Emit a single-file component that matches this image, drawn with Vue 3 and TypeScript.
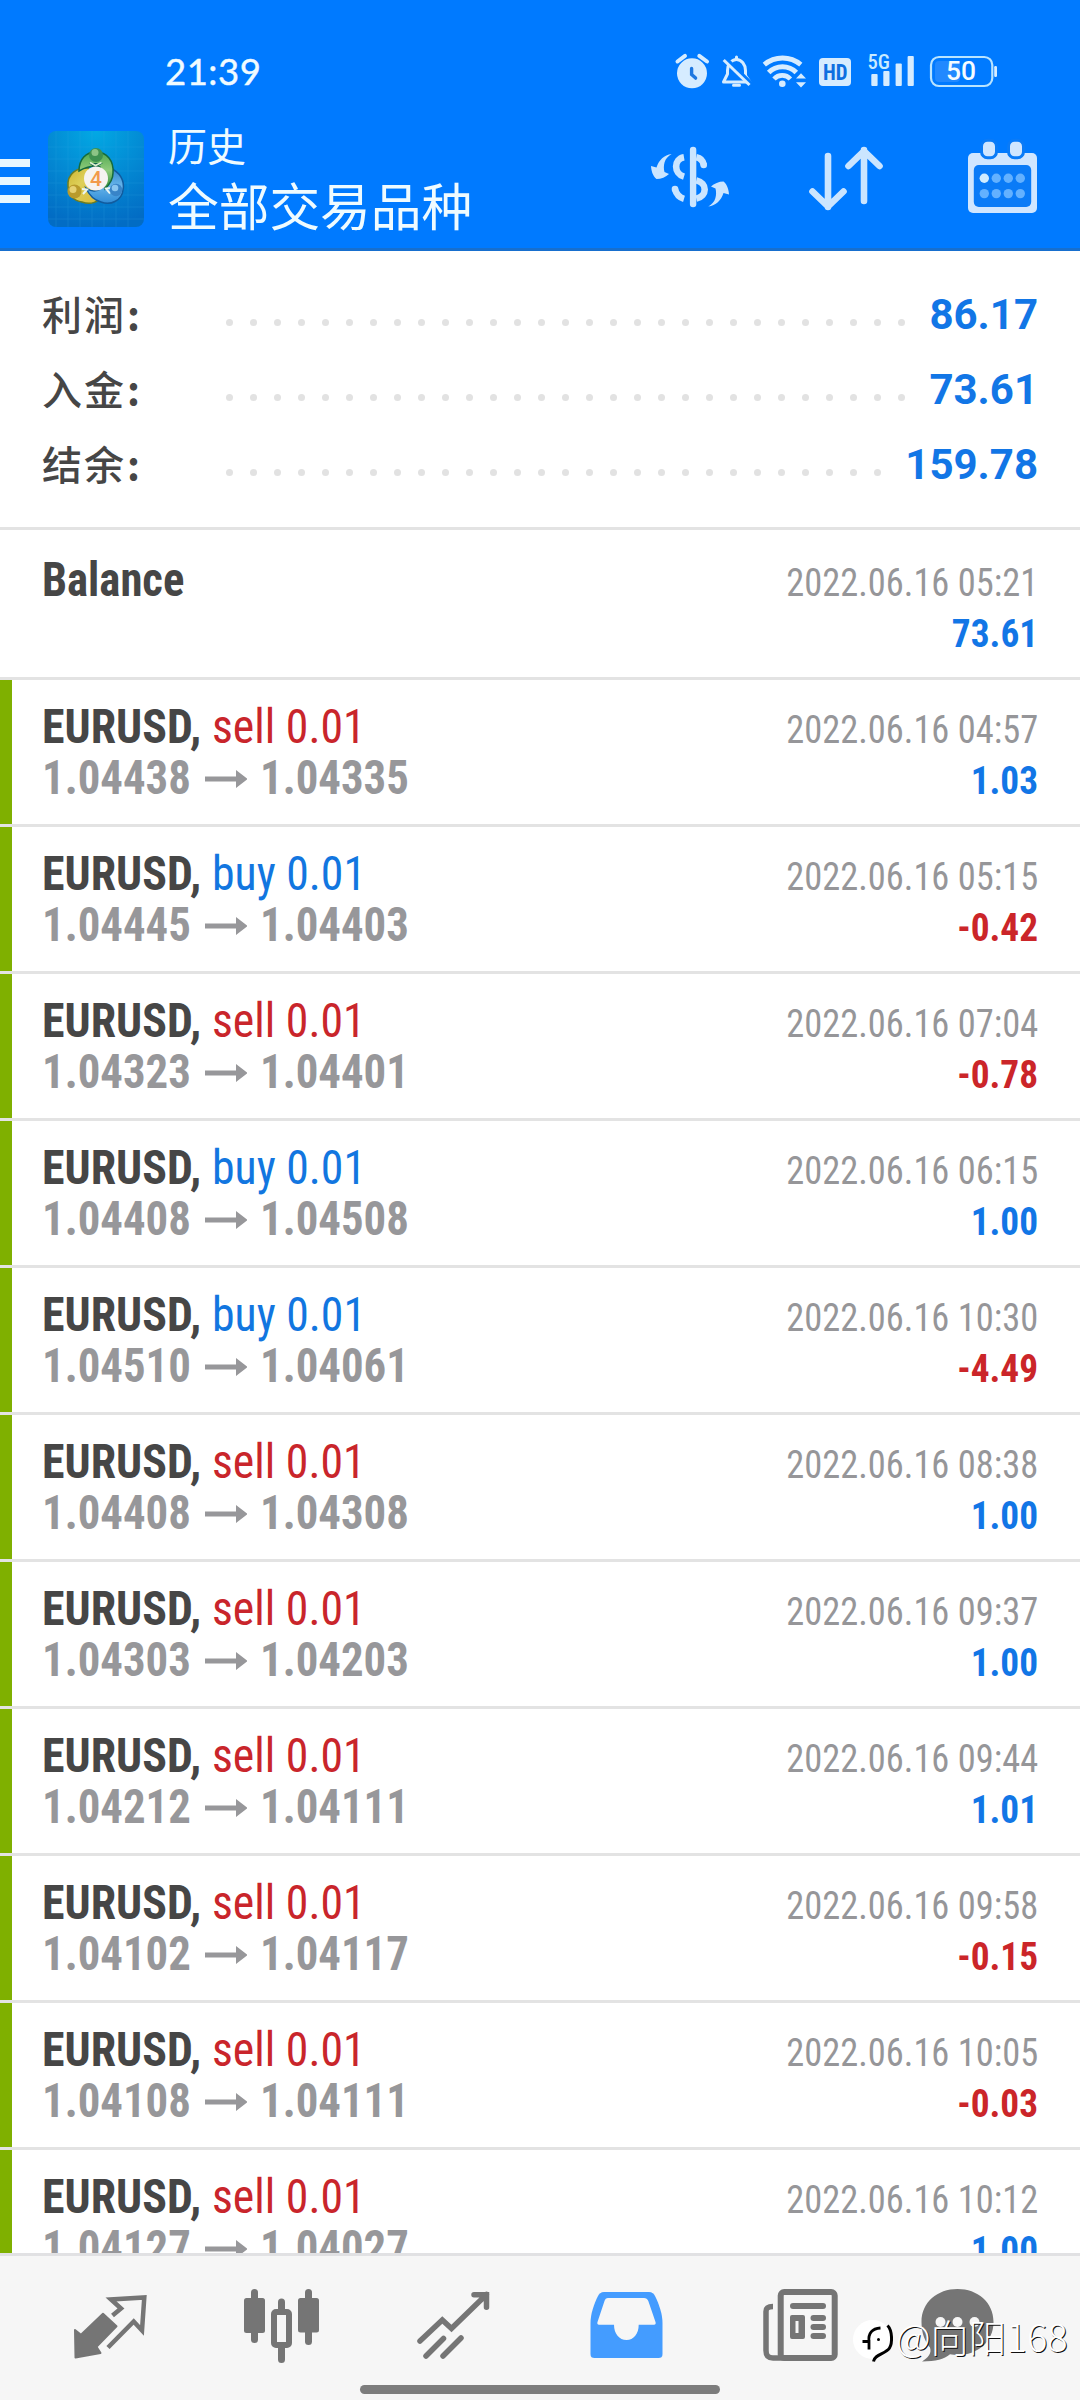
<script setup lang="ts">
interface Summary { label: string; dots: number; value: string }
interface Deal { side: 'sell' | 'buy'; open: string; close: string; time: string; profit: string }

const summary: Summary[] = [
  { label: '利润', dots: 29, value: '86.17' },
  { label: '入金', dots: 29, value: '73.61' },
  { label: '结余', dots: 28, value: '159.78' },
]

const deals: Deal[] = [
  { side: 'sell', open: '1.04438', close: '1.04335', time: '04:57', profit: '1.03' },
  { side: 'buy', open: '1.04445', close: '1.04403', time: '05:15', profit: '-0.42' },
  { side: 'sell', open: '1.04323', close: '1.04401', time: '07:04', profit: '-0.78' },
  { side: 'buy', open: '1.04408', close: '1.04508', time: '06:15', profit: '1.00' },
  { side: 'buy', open: '1.04510', close: '1.04061', time: '10:30', profit: '-4.49' },
  { side: 'sell', open: '1.04408', close: '1.04308', time: '08:38', profit: '1.00' },
  { side: 'sell', open: '1.04303', close: '1.04203', time: '09:37', profit: '1.00' },
  { side: 'sell', open: '1.04212', close: '1.04111', time: '09:44', profit: '1.01' },
  { side: 'sell', open: '1.04102', close: '1.04117', time: '09:58', profit: '-0.15' },
  { side: 'sell', open: '1.04108', close: '1.04111', time: '10:05', profit: '-0.03' },
  { side: 'sell', open: '1.04127', close: '1.04027', time: '10:12', profit: '1.00' },
]
</script>

<template>
  <div class="screen">
    <header class="header">
      <div class="status">
        <span class="clock">21:39</span>
        <svg class="status-icons" width="330" height="50" viewBox="670 46 330 50">
          <g fill="#d6ecff" stroke="none">
            <circle cx="692" cy="73.3" r="15" />
            <path d="M677.5 61.5l7.5-5.6M699.3 55.9l7.7 5.6" stroke="#d6ecff" stroke-width="4" stroke-linecap="round" />
            <path d="M691.6 68.5v6l4 3.6" stroke="#1f78e0" stroke-width="3.4" fill="none" stroke-linecap="round" />
          </g>
          <g fill="none" stroke="#d6ecff" stroke-width="3" stroke-linejoin="round">
            <path d="M727.5 74v-3.500c0-6 4-11 9-11s9 5 9 11v5l4.500 6.500h-26.500z" />
            <path d="M736.5 57v2M733.5 85.2h6" stroke-linecap="round" />
            <path d="M726 58.5l26 25.5" stroke="#007aff" stroke-width="3.500" />
            <path d="M723.7 60l25.8 25" />
          </g>
          <g fill="none" stroke="#d6ecff" stroke-width="5">
            <path d="M764.3 64.6a28.5 28.5 0 0 1 36.5 0" />
            <path d="M768.7 72.5a19.3 19.3 0 0 1 27.6 0" />
            <path d="M774 79a11 11 0 0 1 16.4 0" stroke-width="4.6" />
          </g>
          <g fill="#d6ecff">
            <circle cx="782.3" cy="83.8" r="3.3" />
            <path d="M796 78.6l5-5.4 5 5.4zM796 82.2h10l-5 5.2z" />
            <rect x="819" y="58" width="32" height="28" rx="4" />
            <rect x="871.3" y="74" width="6.3" height="12" rx="1" />
            <rect x="883.3" y="71" width="6.2" height="15" rx="1" />
            <rect x="895.6" y="63.6" width="6.2" height="22.4" rx="1" />
            <rect x="907.6" y="56" width="6.2" height="30" rx="1" />
            <rect x="994.2" y="66" width="2.8" height="11" rx="1.2" />
          </g>
          <rect x="935" y="61" width="25" height="21" rx="4" fill="#2189ff" />
          <rect x="931" y="57" width="61.3" height="29" rx="8" fill="none" stroke="#b9e4ff" stroke-width="2.2" />
          <text x="823" y="80" textLength="24.5" lengthAdjust="spacingAndGlyphs" class="tag" font-size="22" fill="#0e6fe0">HD</text>
          <text x="867.5" y="69.2" textLength="22.5" lengthAdjust="spacingAndGlyphs" class="tag thin" font-size="20.500" fill="#c9ebff">5G</text>
          <text x="946" y="80.3" textLength="30" lengthAdjust="spacingAndGlyphs" class="level" font-size="25" fill="#f4fbff">50</text>
        </svg>
      </div>
      <div class="toolbar">
        <div class="menu"><i></i><i></i><i></i></div>
        <svg class="logo" width="96" height="96" viewBox="0 0 96 96">
          <defs>
            <radialGradient id="tile" cx=".5" cy="0" r="1"><stop offset="0" stop-color="#02a9e4" /><stop offset=".55" stop-color="#0387d2" /><stop offset="1" stop-color="#026cc4" /></radialGradient>
            <linearGradient id="gr" x2="0" y2="1"><stop offset="0" stop-color="#4fa850" /><stop offset=".5" stop-color="#8fcb7c" /><stop offset="1" stop-color="#2d8b3b" /></linearGradient>
            <linearGradient id="ye" x2="1" y2="1"><stop offset="0" stop-color="#cdb42f" /><stop offset=".4" stop-color="#ded05a" /><stop offset="1" stop-color="#d9b93a" /></linearGradient>
            <linearGradient id="bl" x2="0" y2="1"><stop offset="0" stop-color="#2f86cc" /><stop offset=".5" stop-color="#66b4ea" /><stop offset="1" stop-color="#2f8bd6" /></linearGradient>
          </defs>
          <rect width="96" height="96" rx="8" fill="url(#tile)" />
          <path d="M8 0v96M20 0v96M32 0v96M44 0v96M56 0v96M68 0v96M80 0v96M0 16h96M0 28h96M0 40h96M0 52h96M0 64h96M0 76h96M0 88h96" stroke="#35a9e6" stroke-width=".8" opacity=".25" />
          <g stroke-width="1.500">
            <path d="M20 55C19 43 29 36 40 37L54 62C52 72 42 74 34 71C26 70 20 64 20 55z" fill="url(#ye)" stroke="#6d7d22" />
            <path d="M62 37C72 41 77 50 75 59C74 69 63 75 53 71C46 69 41 64 38 57C49 65 60 56 62 37z" fill="url(#bl)" stroke="#115b9e" />
            <path d="M31 40C31 28 38 21 48 21C59 21 66 30 65 42C65 48 61 54 57 58L52 36C44 34 38 36 31 40z" fill="url(#gr)" stroke="#156b3c" />
          </g>
          <path d="M41 32l6 5 8-5z" fill="#0e5f4a" /><path d="M42 31.500l5.500 3 6-3" fill="none" stroke="#dff0d2" stroke-width="1.600" />
          <path d="M34 58l5 .5-4 4.500M63 57l-5 .5 4 5" fill="none" stroke="#eaf6f4" stroke-width="2" />
          <circle cx="48" cy="24" r="7" fill="#3f9150" /><circle cx="47" cy="21.500" r="3.500" fill="#8cc486" />
          <circle cx="26.500" cy="60.500" r="7" fill="#b99b2c" /><circle cx="25" cy="58.500" r="3.500" fill="#e6d173" />
          <circle cx="68" cy="59" r="6.200" fill="#3884c8" /><circle cx="67" cy="57" r="3.300" fill="#8ac6f0" />
          <circle cx="48" cy="47.500" r="12" fill="#f6f3f1" />
          <text x="48" y="55" text-anchor="middle" class="level" font-size="21" fill="#f29a4a">4</text>
        </svg>
        <div class="titles">
          <div class="caption">历史</div>
          <div class="title">全部交易品种</div>
        </div>
        <svg class="actions" width="430" height="84" viewBox="650 136 430 84">
          <g fill="none" stroke="#cbe5ff" stroke-width="6.6">
            <path d="M693.100 150v54" stroke-linecap="round" stroke-width="6.400" />
            <path d="M684 157.200C673.500 159 673.500 173.500 684 176.600M675 189.300C676.500 194.500 679.500 197.500 684 198.800M696.300 157.200C700.500 158 703 160.500 703.800 164.800M696.300 180.400C707.500 183 707.500 196 696.300 198.600" />
            <circle cx="675" cy="189" r="3.300" fill="#cbe5ff" stroke="none" />
            <circle cx="703.700" cy="165" r="3.300" fill="#cbe5ff" stroke="none" />
            <path d="M671.700 154C664 158 663 166 664.500 172L669 174C666 177 661 179 656.500 179C652.500 176 651.200 170 651 166L656.500 167.500C659 160 664 155 671.700 154z" fill="#cbe5ff" stroke="none" />
            <path d="M671.700 154C664 158 663 166 664.500 172L669 174C666 177 661 179 656.500 179C652.500 176 651.200 170 651 166L656.500 167.500C659 160 664 155 671.700 154z" fill="#cbe5ff" stroke="none" transform="rotate(180 690 180.300)" />
          </g>
          <path d="M828 156v51M812.500 191.500L828 206.500l15.500-15M864 201v-51M848.500 166L864 151l15.500 15" fill="none" stroke="#cbe5ff" stroke-width="6.600" stroke-linecap="round" stroke-linejoin="round" />
          <rect x="968" y="153" width="69" height="60" rx="5" fill="#d0e6ff" />
          <rect x="973.800" y="165" width="57.400" height="42" rx="5" fill="#0a7bf7" />
          <g fill="#d0e6ff" stroke="#0a7bf7" stroke-width="3">
            <rect x="981.500" y="140.200" width="15" height="17.600" rx="6" />
            <rect x="1008.500" y="140.200" width="15" height="17.600" rx="6" />
          </g>
          <g fill="#63b1ff">
            <circle cx="984.300" cy="178.300" r="4.700" fill="#d0ecff" />
            <circle cx="996.300" cy="178.300" r="4.700" /><circle cx="1008.300" cy="178.300" r="4.700" /><circle cx="1020.300" cy="178.300" r="4.700" />
            <circle cx="984.300" cy="193.600" r="4.700" /><circle cx="996.300" cy="193.600" r="4.700" /><circle cx="1008.300" cy="193.600" r="4.700" /><circle cx="1020.300" cy="193.600" r="4.700" />
          </g>
        </svg>
      </div>
    </header>

    <section class="summary">
      <div v-for="s in summary" :key="s.label" class="sum-row">
        <span class="sum-label">{{ s.label }}<b>:</b></span>
        <span class="dots"><i v-for="n in s.dots" :key="n"></i></span>
        <span class="sum-value">{{ s.value }}</span>
      </div>
    </section>

    <main class="list">
      <div class="row balance">
        <div class="left"><div class="line1"><b class="name">Balance</b></div></div>
        <div class="right"><div class="date">2022.06.16 05:21</div><div class="profit">73.61</div></div>
      </div>
      <div v-for="d in deals" :key="d.time" class="row deal">
        <div class="left">
          <div class="line1"><b class="symbol">EURUSD,</b><span class="op" :class="d.side">{{ d.side }} 0.01</span></div>
          <div class="prices">
            <span>{{ d.open }}</span>
            <svg width="42" height="20" viewBox="0 0 42 20"><path d="M0 7.500h31V1l11.500 9L31 19v-6.500H0z" fill="#97979a" /></svg>
            <span>{{ d.close }}</span>
          </div>
        </div>
        <div class="right">
          <div class="date">2022.06.16 {{ d.time }}</div>
          <div class="profit" :class="{ loss: d.profit.startsWith('-') }">{{ d.profit }}</div>
        </div>
      </div>
    </main>

    <nav class="nav">
      <svg viewBox="23 2256 173 144">
        <path d="M75 2330l6 4.700 22-21 13.500 12.500-20 20.500 4 6.300-25 4.500z" fill="#757575" stroke="#757575" stroke-width="2" stroke-linejoin="round" />
        <path d="M112.500 2315.500l8.500-7-10-9 33.300-2-2.300 33-8.300-9-25.700 26" fill="none" stroke="#757575" stroke-width="4.500" />
      </svg>
      <svg viewBox="196 2256 173 144" fill="#757575">
        <rect x="244" y="2298" width="21" height="35" rx="2.500" /><rect x="251" y="2289" width="7" height="54" rx="3.500" />
        <rect x="298" y="2298" width="21" height="34.500" rx="2.500" /><rect x="305" y="2289" width="7" height="56" rx="3.500" />
        <path d="M281.500 2302v12M281.500 2345v14.500" stroke="#757575" stroke-width="7" stroke-linecap="round" />
        <rect x="274" y="2312" width="15" height="33" rx="2" fill="#f6f6f6" stroke="#757575" stroke-width="6" />
      </svg>
      <svg viewBox="369 2256 173 144" fill="none" stroke="#757575" stroke-width="5.500" stroke-linecap="round">
        <path d="M420 2341l22.300-21 9.200 8.500 35-34M474 2294.700h12.500v12.500M426 2356l17.500-17.500M443 2356l18-18" stroke-linejoin="miter" />
      </svg>
      <svg viewBox="542 2256 173 144">
        <path d="M604 2292h45c3 0 5 2 6 4 4 8 7.500 18 7.500 27v31c0 3-1.500 4-4 4h-64c-2.500 0-4-1-4-4v-31c0-9 3.500-19 7.500-27 1-2 3-4 6-4z" fill="#449cff" />
        <path d="M608 2298h36c2 0 3.500 1 4.300 3l7.200 21c.5 1.500 0 2.700-1.500 2.700h-15.300c0 9-5 15.300-12.200 15.300s-12.500-6.300-12.500-15.300h-15c-1.500 0-2-1.200-1.500-2.700l7-21c.7-2 1.700-3 3.500-3z" fill="#f6f6f6" />
      </svg>
      <svg viewBox="715 2256 173 144" fill="#757575">
        <rect x="780.700" y="2292" width="54" height="66" rx="3.500" fill="none" stroke="#757575" stroke-width="6" />
        <path d="M773 2306.500c-5 0-7 1.500-7 5v39c0 5 2 7.500 7 7.500h11" fill="none" stroke="#757575" stroke-width="5.500" />
        <rect x="790" y="2303" width="36" height="6" rx="3" />
        <path fill-rule="evenodd" d="M792 2315h11q2 0 2 2v20q0 2-2 2h-11q-2 0-2-2v-20q0-2 2-2zM795.500 2321v12h3v-12z" />
        <rect x="810.500" y="2315" width="15.500" height="6" rx="3" /><rect x="810.500" y="2324" width="15.500" height="6" rx="3" /><rect x="810.500" y="2333" width="15.500" height="6" rx="3" />
      </svg>
      <svg viewBox="888 2256 173 144">
        <path d="M957.500 2289c20 0 36 13 36 33s-16 33-36 33c-2.500 0-5-.3-7.500-.8-6 5-14 7-28 7.300 6-4 10-8 8-14-5-6-8.500-14-8.500-25.500 0-20 16-33 36-33z" fill="#757575" />
        <g fill="#f6f6f6"><circle cx="940.500" cy="2322" r="5" /><circle cx="957.500" cy="2322" r="5" /><circle cx="974.500" cy="2322" r="5" /></g>
      </svg>
      <div class="home"></div>
    </nav>

    <div class="watermark">
      <svg width="44" height="50" viewBox="852 2316 44 50">
        <circle cx="872.500" cy="2339.500" r="19.500" fill="#fff" />
        <path d="M862.500 2341.500h6.500v8M869 2341.500c-1-8 3-13 11.500-13.500" fill="none" stroke="#000" stroke-width="2.800" />
        <path d="M887.500 2325.500c5 5 5 18 2 22.500-3.500 6-15 6-16 13.500" fill="none" stroke="#000" stroke-width="3" />
        <circle cx="878.500" cy="2339.500" r="1.500" fill="#000" />
      </svg>
      <span>@向阳168</span>
    </div>
  </div>
</template>

<style>
body { margin: 0; background: #fff; }
</style>

<style scoped>
.screen {
  position: relative;
  display: flex;
  flex-direction: column;
  width: 1080px;
  height: 2400px;
  overflow: hidden;
  background: #fff;
  font-family: "Roboto Condensed", Roboto, "Noto Sans CJK SC", sans-serif;
}
.header {
  box-sizing: border-box;
  height: 251px;
  background: #007aff;
  border-bottom: 3px solid #176fce;
}
.status { display: flex; align-items: center; height: 96px; padding: 46px 80px 0 165px; box-sizing: border-box; justify-content: space-between; }
.clock { font: 400 36.500px/50px Lato, sans-serif; color: #f0fbff; letter-spacing: 0.500px; -webkit-text-stroke: 0.4px #f0fbff; }
.tag { font-family: Roboto, sans-serif; font-weight: 700; font-stretch: 75%; }
.thin { font-weight: 500; }
.level { font-family: Roboto, sans-serif; font-weight: 500; font-stretch: 90%; }
.toolbar { display: flex; height: 152px; }
.menu { display: flex; flex-direction: column; gap: 10px; width: 30px; margin: 63px 18px 0 0; }
.menu i { height: 8px; background: #e8f7ff; }
.logo { margin-top: 35px; }
.titles { width: 330px; margin-left: 24px; color: #effbff; font-family: "Noto Sans CJK SC", sans-serif; white-space: nowrap; }
.caption { margin-top: 19px; font-size: 39px; line-height: 58px; }
.title { font-size: 50.700px; line-height: 72px; margin-top: -5px; }
.actions { margin: 40px 0 0 auto; }

.summary { box-sizing: border-box; height: 279px; padding: 26px 42px 0 42px; border-bottom: 3px solid #e3e3e3; }
.sum-row { display: flex; height: 75px; align-items: center; }
.sum-label { width: 184px; font: 500 40px/72px "Noto Sans CJK SC", sans-serif; color: #464646; letter-spacing: 2px; padding-bottom: 4px; }
.sum-label b { margin-left: 1px; font-weight: 700; }
.dots { display: flex; gap: 17px; margin-top: 16px; flex: 1; }
.dots i { flex: none; width: 7px; height: 7px; border-radius: 50%; background: #e2e2e2; }
.sum-value { font: 700 42px/75px Roboto, sans-serif; color: #1276e6; }

.list { height: 1723px; overflow: hidden; }
.row { position: relative; display: flex; justify-content: space-between; box-sizing: border-box; height: 147px; padding: 21px 42px 0 42px; border-bottom: 3px solid #e3e3e3; }
.deal::before { content: ""; position: absolute; left: 0; top: 0; width: 12px; height: 144px; background: #7fb000; }
.balance { height: 150px; padding-top: 24px; }
.line1, .prices, .date, .profit { font-stretch: 75%; white-space: nowrap; }
.line1 { display: flex; font-size: 47.500px; line-height: 52px; color: #464646; }
.line1 > *, .prices span { transform-origin: left; }
.symbol { width: 170px; transform: scaleX(0.965); }
.name { transform: scaleX(0.94); }
.op { transform: scaleX(0.963); }
.prices { display: flex; align-items: center; gap: 14px; font-size: 47.500px; line-height: 51px; font-weight: 700; color: #97979a; }
.prices span { width: 149px; transform: scaleX(0.943); }
.prices span:last-child { margin-left: -1px; }
.right { text-align: right; }
.date, .profit { transform-origin: right; font-size: 39.500px; line-height: 51px; }
.date { margin-top: 3px; color: #969699; transform: scaleX(0.922); }
.profit { font-weight: 700; color: #1276e6; transform: scaleX(0.945); }
.profit.loss { color: #cb2529; }
.sell { color: #c9252b; }
.buy { color: #1276e0; }

.nav { position: relative; display: flex; box-sizing: border-box; height: 147px; padding-left: 23px; border-top: 3px solid #e1e1e3; background: #f6f6f6; }
.nav svg { flex: none; width: 173px; height: 144px; }
.home { position: absolute; left: 360px; top: 129px; width: 360px; height: 9px; border-radius: 5px; background: #7d7d7d; }
.watermark { position: absolute; left: 852px; top: 2316px; display: flex; align-items: flex-start; height: 50px; white-space: nowrap; }
.watermark span { margin: -4px 0 0 0; font: 300 38px/48px "Noto Sans CJK SC", sans-serif; color: #fff; text-shadow: 1px 1px 0 #111; }
</style>
